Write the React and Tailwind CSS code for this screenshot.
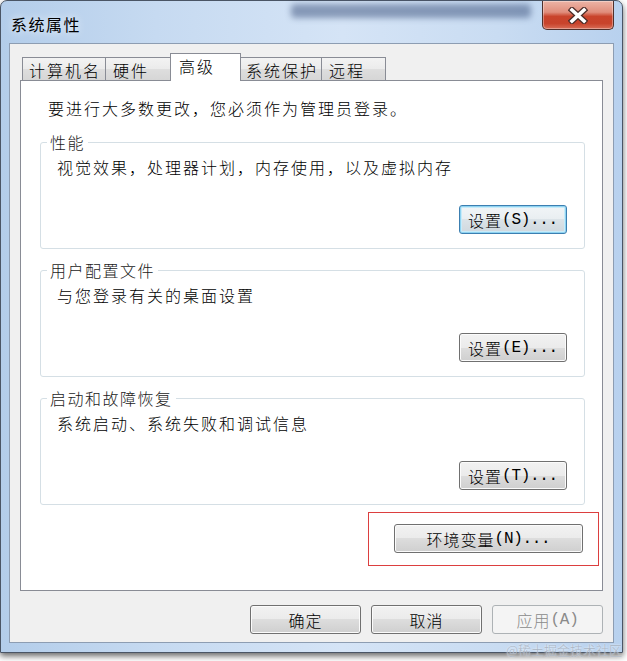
import React from "react";

const BTN =
  "flex items-center justify-center h-[29px] rounded-[3px] border text-[16px] leading-[20px] tracking-[1px]";
const BTN_NORMAL =
  "border-[#707070] bg-[linear-gradient(to_bottom,#f2f2f2_0%,#ebebeb_50%,#dddddd_50%,#cfcfcf_100%)] shadow-[inset_0_0_0_1px_#fbfbfb]";
const BTN_FOCUS =
  "border-[#3c7fb1] bg-[linear-gradient(to_bottom,#f1f5f7_0%,#e9eef1_50%,#dbe3e8_50%,#cfd8de_100%)] shadow-[inset_0_0_0_1px_#8fd3f1,inset_0_0_0_2px_#c8ebf9]";
const BTN_DISABLED = "border-[#adb2b5] bg-[#f4f4f4] text-[#8a8a8a]";

const Latin = ({ children }) => (
  <span className="font-['Liberation_Mono',monospace] tracking-[-0.3px]">{children}</span>
);

const Group = ({ title, text, button, focus }) => (
  <fieldset className="ml-[19px] mr-[17px] border border-[#d5dfe5] rounded-[3px]">
    <legend className="ml-[6px] px-[3px] text-[16px] leading-[20px] tracking-[1.5px] text-[#1a1a1a]">
      {title}
    </legend>
    <div className="pl-[16px] pr-[17px] pb-[14px]">
      <div className="mt-[5px] text-[16px] leading-[20px] tracking-[2px]">{text}</div>
      <div className="mt-[28px] flex justify-end">
        <div className={`${BTN} w-[108px] ${focus ? BTN_FOCUS : BTN_NORMAL}`}>
          设置<Latin>({button})...</Latin>
        </div>
      </div>
    </div>
  </fieldset>
);

const Tab = ({ label, className }) => (
  <div
    className={`h-[23px] -ml-px first:ml-0 flex items-center border-t border-l border-r border-[#898c95] bg-[linear-gradient(to_bottom,#f3f3f3_0%,#ebebeb_50%,#dedede_51%,#d6d6d6_100%)] text-[16px] leading-[20px] tracking-[2px] pt-[1px] ${className}`}
  >
    {label}
  </div>
);

export default function App() {
  return (
    <div className="w-[627px] h-[661px] bg-white overflow-hidden relative font-['Noto_Sans_CJK_SC',sans-serif] font-light text-black">
      <div className="w-[623px] h-[653px] flex flex-col rounded-t-[7px] border border-[#4a5565] bg-[linear-gradient(to_right,#b3cdea_0%,#c6daf1_25%,#d5e4f6_55%,#c9dcf2_80%,#b8d1ee_100%)] shadow-[0_3px_6px_rgba(0,0,0,0.6)]">
        {/* title bar */}
        <div className="h-[42px] flex items-start">
          <div className="ml-[10px] mt-[12px] text-[16px] font-normal leading-[22px] tracking-[1.5px] [text-shadow:0_0_8px_#ffffff]">
            系统属性
          </div>
          <div className="ml-[210px] mt-[3px] h-[14px] w-[240px] rounded-[4px] bg-[#394f7a] opacity-50 blur-[3px]" />
          <div className="ml-auto mr-[8px] w-[72px] h-[29px] flex items-center justify-center rounded-b-[5px] border border-t-0 border-[#50302b] bg-[linear-gradient(to_bottom,#ecb4a6_0%,#e08e7c_40%,#c9442c_55%,#c8432b_80%,#d86e57_100%)] shadow-[inset_0_0_0_1px_rgba(255,255,255,0.35)]">
            <svg width="20" height="17" viewBox="0 0 20 17">
              <path d="M4 3 L16 14 M16 3 L4 14" stroke="#4a2c28" strokeWidth="6" strokeLinecap="square" />
              <path d="M4 3 L16 14 M16 3 L4 14" stroke="#ffffff" strokeWidth="3.6" strokeLinecap="square" />
            </svg>
          </div>
        </div>

        {/* client area */}
        <div className="mx-[8px] h-[600px] border border-[#8d9db2] bg-[#f0f0f0] pt-[9px] px-[10px] flex flex-col">
          {/* tabs */}
          <div className="h-[27px] flex items-end pl-[2px]">
            <Tab label="计算机名" className="w-[84px] pl-[6px]" />
            <Tab label="硬件" className="w-[66px] pl-[7px]" />
            <div className="relative z-10 -ml-px -mb-px h-[28px] w-[71px] pl-[8px] pb-[4px] flex items-center border-t border-l border-r border-[#898c95] bg-white text-[16px] leading-[20px] tracking-[2px]">
              高级
            </div>
            <Tab label="系统保护" className="w-[82px] pl-[5px]" />
            <Tab label="远程" className="w-[65px] pl-[7px]" />
          </div>

          {/* panel */}
          <div className="h-[511px] border border-[#898c95] bg-white flex flex-col">
            <div className="ml-[27px] mt-[17px] text-[16px] leading-[20px] tracking-[2px]">
              要进行大多数更改，您必须作为管理员登录。
            </div>
            <div className="mt-[14px]">
              <Group title="性能" text="视觉效果，处理器计划，内存使用，以及虚拟内存" button="S" focus />
            </div>
            <div className="mt-[11px]">
              <Group title="用户配置文件" text="与您登录有关的桌面设置" button="E" />
            </div>
            <div className="mt-[11px]">
              <Group title="启动和故障恢复" text="系统启动、系统失败和调试信息" button="T" />
            </div>
            <div className="self-end mr-[3px] mt-[7px] w-[231px] h-[54px] border border-[#dc3f3f] pl-[25px] pt-[11px]">
              <div className={`${BTN} ${BTN_NORMAL} w-[189px]`}>
                环境变量<Latin>(N)...</Latin>
              </div>
            </div>
          </div>

          {/* dialog buttons */}
          <div className="mt-[14px] flex justify-end gap-[10px]">
            <div className={`${BTN} ${BTN_NORMAL} w-[111px]`}>确定</div>
            <div className={`${BTN} ${BTN_NORMAL} w-[111px]`}>取消</div>
            <div className={`${BTN} ${BTN_DISABLED} w-[111px]`}>
              应用<Latin>(A)</Latin>
            </div>
          </div>
        </div>
      </div>

      <div className="absolute right-[5px] bottom-[4px] text-[13px] leading-[14px] text-[#a9b5c4] [text-shadow:0_0_2px_#ffffff]">
        @稀土掘金技术社区
      </div>
    </div>
  );
}
